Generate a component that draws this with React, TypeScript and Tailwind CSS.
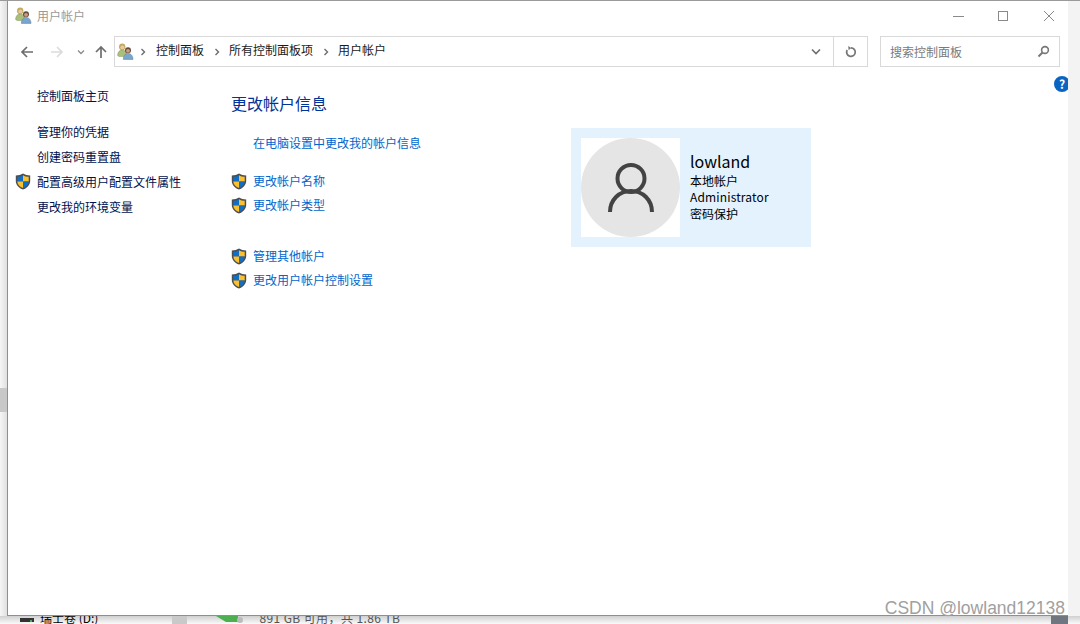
import React from "react";

const Shield = () => (
  <svg width="16" height="17" viewBox="0 0 16 17" className="shrink-0">
    <path d="M8 .6 C10 1.9 12.5 2.5 15.2 2.5 V8 C15.2 12 12 15.2 8 16.6 C4 15.2 .8 12 .8 8 V2.5 C3.5 2.5 6 1.9 8 .6Z" fill="#4a4f55" />
    <path d="M8 2.2 V8.4 H2.3 V3.8 C4.3 3.7 6.3 3.2 8 2.2Z" fill="#0f6fc6" />
    <path d="M8 2.2 C9.7 3.2 11.7 3.7 13.7 3.8 V8.4 H8Z" fill="#fbc02d" />
    <path d="M2.3 8.4 H8 V15 C4.8 13.8 2.5 11.5 2.3 8.4Z" fill="#fbc02d" />
    <path d="M8 8.4 H13.7 C13.5 11.5 11.2 13.8 8 15Z" fill="#0f6fc6" />
  </svg>
);

const Users = () => (
  <svg width="17" height="17" viewBox="0 0 17 17" className="shrink-0">
    <ellipse cx="5.2" cy="3.8" rx="3.2" ry="3.4" fill="#c4a95f" />
    <circle cx="5.4" cy="4.4" r="2" fill="#e7c9a4" />
    <path d="M.6 12.5 C.6 9 2.5 7 5.2 7 C8 7 9.8 9 9.8 12.5 L7 13.5 H2Z" fill="#a9bf7a" stroke="#8a9a68" strokeWidth=".5" />
    <circle cx="11" cy="7.2" r="3" fill="#6b4a38" />
    <circle cx="11" cy="7.8" r="1.9" fill="#c99f84" />
    <path d="M6.4 16.4 C6.4 12.5 8.5 10.4 11 10.4 C13.6 10.4 16 12.5 16 16.4Z" fill="#7ba6cc" stroke="#56789a" strokeWidth=".5" />
  </svg>
);

const Crumb = () => (
  <svg width="6" height="8" viewBox="0 0 6 8" className="shrink-0">
    <path d="M1.5 1 4.5 4 1.5 7" fill="none" stroke="#6d6d6d" strokeWidth="1.4" />
  </svg>
);

const Row = ({ text, shield, className }: { text: string; shield?: boolean; className: string }) => (
  <div className={`flex items-center h-6 text-xs text-[#0066cc] ${className}`}>
    <div className="w-[22px] shrink-0">{shield && <Shield />}</div>
    <span>{text}</span>
  </div>
);

const Side = ({ text, shield, className }: { text: string; shield?: boolean; className: string }) => (
  <div className={`flex items-center text-xs text-[#00114d] ${className}`}>
    <div className="w-[22px] shrink-0">{shield && <Shield />}</div>
    <span>{text}</span>
  </div>
);

export default function App() {
  return (
    <div
      className="relative w-[1080px] h-[624px] overflow-hidden flex flex-col bg-[#f3f3f3]"
      style={{ fontFamily: '"Noto Sans CJK SC", "Open Sans", sans-serif' }}
    >
      <div className="h-px shrink-0 bg-[#9a9a9a]" />
      <div className="flex h-[615px] shrink-0">
        <div className="w-[7px] shrink-0 flex flex-col bg-gradient-to-r from-[#f6f6f6] to-[#e0e0e0]">
          <div className="h-[387px]" />
          <div className="h-6 bg-[#c8c8c8]" />
        </div>
        <div className="relative w-[1061px] shrink-0 overflow-hidden bg-white border-l border-b border-[#8f8f8f] flex flex-col">
          {/* title bar */}
          <div className="flex items-center h-[29px] shrink-0 pl-[7px] text-xs text-[#9a9a9a]">
            <Users />
            <span className="ml-[5px]">用户帐户</span>
            <div className="ml-auto flex items-center">
              <svg width="12" height="12" viewBox="0 0 12 12" className="mr-[32px]">
                <path d="M0 6.5H11" stroke="#8a8a8a" strokeWidth="1" />
              </svg>
              <svg width="12" height="12" viewBox="0 0 12 12" className="mr-[34px]">
                <rect x="1.5" y="1.5" width="9" height="9" fill="none" stroke="#8a8a8a" strokeWidth="1" />
              </svg>
              <svg width="12" height="12" viewBox="0 0 12 12" className="mr-[13px]">
                <path d="M1 1 11 11M11 1 1 11" stroke="#8a8a8a" strokeWidth="1" />
              </svg>
            </div>
          </div>
          {/* nav row */}
          <div className="flex items-center h-[31px] mt-[6px] shrink-0">
            <div className="w-[106px] shrink-0 flex items-center pl-[12px]">
              <svg width="14" height="14" viewBox="0 0 14 14" className="mr-[16px]">
                <path d="M13 7H2M7 2 2 7l5 5" fill="none" stroke="#6e6e6e" strokeWidth="1.7" />
              </svg>
              <svg width="14" height="14" viewBox="0 0 14 14" className="mr-[13px]">
                <path d="M1 7h11M7 2l5 5-5 5" fill="none" stroke="#dcdcdc" strokeWidth="1.7" />
              </svg>
              <svg width="8" height="6" viewBox="0 0 8 6" className="mr-[9px]">
                <path d="M1 1.5 4 4.5 7 1.5" fill="none" stroke="#8a8a8a" strokeWidth="1.3" />
              </svg>
              <svg width="14" height="14" viewBox="0 0 14 14">
                <path d="M7 13V2M2 7l5-5 5 5" fill="none" stroke="#6e6e6e" strokeWidth="1.7" />
              </svg>
            </div>
            <div className="flex items-center w-[754px] h-[31px] shrink-0 border border-[#d9d9d9] text-xs text-[#1a1a1a]">
              <div className="ml-[2px] flex items-center">
                <Users />
              </div>
              <div className="ml-[6px]"><Crumb /></div>
              <span className="ml-[10px] pb-1">控制面板</span>
              <div className="ml-[10px]"><Crumb /></div>
              <span className="ml-[9px] pb-1">所有控制面板项</span>
              <div className="ml-[10px]"><Crumb /></div>
              <span className="ml-[9px] pb-1">用户帐户</span>
              <div className="ml-auto flex items-center justify-center w-[34px] h-full">
                <svg width="10" height="7" viewBox="0 0 10 7">
                  <path d="M1 1.5 5 5.5 9 1.5" fill="none" stroke="#6e6e6e" strokeWidth="1.6" />
                </svg>
              </div>
              <div className="flex items-center justify-center w-[34px] h-full border-l border-[#d9d9d9]">
                <svg width="12" height="12" viewBox="0 0 12 12">
                  <path d="M6 1.8A4.3 4.3 0 1 1 2.2 4" fill="none" stroke="#777777" strokeWidth="1.7" />
                  <path d="M3.2 0 6.3 1.9 3.6 4.2Z" fill="#777777" />
                </svg>
              </div>
            </div>
            <div className="ml-[12px] flex items-center w-[180px] h-[31px] shrink-0 border border-[#d9d9d9] pl-[9px] pr-[9px] text-xs text-[#7a7a7a]">
              <span>搜索控制面板</span>
              <svg width="13" height="13" viewBox="0 0 13 13" className="ml-auto">
                <circle cx="8" cy="5" r="3.4" fill="none" stroke="#777777" strokeWidth="1.6" />
                <path d="M5.5 7.5 1.5 11.5" stroke="#777777" strokeWidth="2" />
              </svg>
            </div>
          </div>
          {/* help */}
          <div className="absolute right-[-2px] top-[75px] w-4 h-4 rounded-full bg-[#0a64c2] text-white text-xs font-bold flex items-center justify-center leading-none">
            ?
          </div>
          {/* content */}
          <div className="flex">
            <div className="w-[223px] shrink-0 pt-[17px] pl-[7px] flex flex-col">
              <Side text="控制面板主页" className="h-6" />
              <Side text="管理你的凭据" className="h-6 mt-3" />
              <Side text="创建密码重置盘" className="h-[25px]" />
              <Side text="配置高级用户配置文件属性" shield className="h-[25px]" />
              <Side text="更改我的环境变量" className="h-[25px]" />
            </div>
            <div className="w-[340px] shrink-0 pt-[20px] flex flex-col">
              <div className="h-8 flex items-center text-base text-[#003399]">更改帐户信息</div>
              <Row text="在电脑设置中更改我的帐户信息" className="mt-[12px]" />
              <Row text="更改帐户名称" shield className="mt-[14px]" />
              <Row text="更改帐户类型" shield className="" />
              <Row text="管理其他帐户" shield className="mt-[27px]" />
              <Row text="更改用户帐户控制设置" shield className="" />
            </div>
            <div className="mt-[61px] w-[240px] h-[119px] shrink-0 bg-[#e3f2fd] flex pl-[10px] pt-[10px]">
              <div className="w-[99px] h-[99px] bg-white shrink-0">
                <div className="w-[99px] h-[99px] rounded-full bg-[#e5e5e5] flex items-center justify-center">
                  <svg width="46" height="50" viewBox="0 0 46 50">
                    <circle cx="23" cy="15.5" r="13.5" fill="none" stroke="#434343" strokeWidth="4" />
                    <path d="M2 49 C2 37 11 28 23 28 C35 28 44 37 44 49" fill="none" stroke="#434343" strokeWidth="4" />
                  </svg>
                </div>
              </div>
              <div className="ml-[10px] flex flex-col text-xs text-black">
                <span className="text-base h-[19px] mt-[14px] leading-[19px]">lowland</span>
                <span className="h-4 leading-4 mt-[2px]">本地帐户</span>
                <span className="h-4 leading-4 tracking-[0.15px]">Administrator</span>
                <span className="h-[18px] leading-[18px]">密码保护</span>
              </div>
            </div>
          </div>
        </div>
        <div className="w-3 shrink-0 bg-[#f3f3f3]" />
      </div>
      {/* what shows below the window */}
      <div className="relative h-2 shrink-0 overflow-hidden flex bg-gradient-to-b from-[#d0d0d0] to-[#fafafa] text-xs text-[#555555]">
        <div className="w-5" />
        <div className="relative w-[14px] h-[4px] mt-[2px] bg-[#333333]">
          <div className="absolute right-[2px] bottom-0 w-[2px] h-[2px] bg-[#4caf50]" />
        </div>
        <span className="ml-[6px] -mt-[6px] text-black">瑞士卷 (D:)</span>
        <div className="w-[15px] h-2 ml-[74px] bg-[#c9c9c9]" />
        <svg width="30" height="8" viewBox="0 0 30 8" className="ml-[29px]">
          <path d="M0 0 10 6H22V0Z" fill="#4caf50" />
          <circle cx="24" cy="4" r="3" fill="#bbbbbb" />
        </svg>
        <span className="ml-[13px] -mt-[6px] tracking-[0.4px]">891 GB 可用，共 1.86 TB</span>
        <div className="absolute right-[12px] top-0 w-[17px] h-2 bg-[#6f7680]" />
      </div>
      <div
        className="absolute right-[15px] top-[597px] text-[17.5px] leading-[22px] text-[#a0a0a0]"
        style={{ fontFamily: '"Liberation Sans", sans-serif' }}
      >
        CSDN @lowland12138
      </div>
    </div>
  );
}
